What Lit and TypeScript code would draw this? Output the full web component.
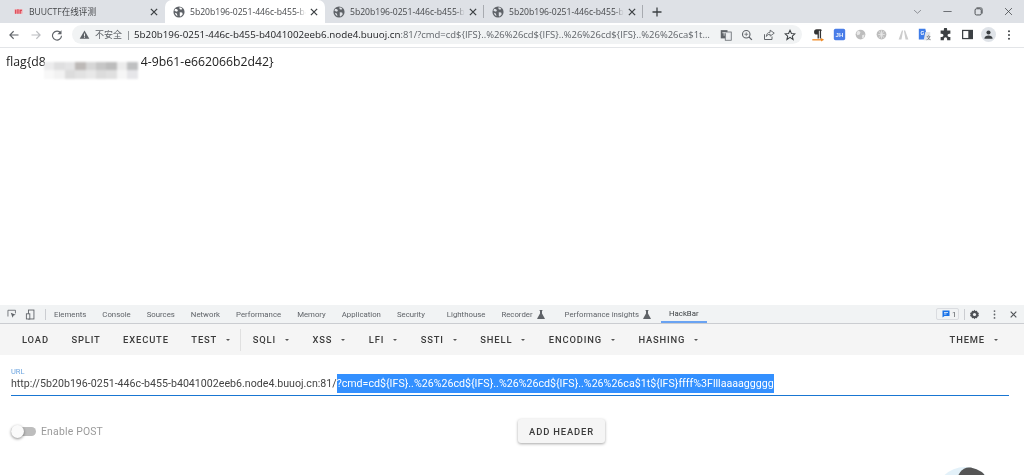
import { LitElement, html, css, svg } from "lit";
import { customElement } from "lit/decorators.js";

const icon = (w: number, body: unknown, vb = "0 0 16 16") =>
  html`<svg width=${w} height=${w} viewBox=${vb} class="ic">${body}</svg>`;

const globeBody = (bg: string) => svg`<circle cx="8" cy="8" r="7.4" fill="#5f6368"/><path d="M3 3.5c2 .3 3 1 3.6 2.2L5.4 7.6 3.3 7 1.8 6zM8.6 1.6c1.6.2 3 .9 3.9 2L10.8 5 8.7 4zM9 8.2l3.2.3.8 2.4-2.7 3-1.2-.6zM2.500 9l2.600 1 .9 3.400C4 12.900 3 11 2.500 9z" fill=${bg}/>`;
const globe = icon(12, globeBody("#dee1e6"));
const globeW = icon(12, globeBody("#fff"));
const close = (c = "#3c4043") => icon(10, svg`<path d="M3 3l10 10M13 3L3 13" stroke=${c} stroke-width="2" fill="none"/>`);
const caret = html`<span class="caret"></span>`;

const tabs = [
  { t: "BUUCTF在线评测", cls: "tab first", fav: icon(9, svg`<path d="M1 4h14v8H1z" fill="#f3a0a8"/><path d="M2 12V5h2v7zM6 12V4h2v8zM10 12V5h4v2h-2v5z" fill="#d9434f"/>`) },
  { t: "5b20b196-0251-446c-b455-b4041002eeb6", cls: "tab active", fav: globeW },
  { t: "5b20b196-0251-446c-b455-b4041002eeb6", cls: "tab", fav: globe },
  { t: "5b20b196-0251-446c-b455-b4041002eeb6", cls: "tab", fav: globe },
];

const flask = html`<svg width="8" height="9" viewBox="0 0 8 9" class="flask"><path d="M2.6 0h2.8v.9H5v2.6L7.8 8.400V9H.2v-.6L3 3.500V.9h-.4z" fill="#5f6368"/></svg>`;

const cells = [
  "#ececed","#dfdfe0","#e4e4e5","#bdb9b7","#d6d6d6","#c6c6c6","#bcbcbc","#ececec","#bfc0c1",
  "#f8f8f8","#f2f2f2","#dcdcdc","#e2e2e2","#e8e8e8","#dcdcdc","#e0e0e0","#f6f6f6","#e6e6e9",
];

@customElement("app-root")
export class AppRoot extends LitElement {
  static styles = css`
    :host { display: flex; flex-direction: column; width: 1024px; height: 475px; overflow: hidden; position: relative; background: #fff; font-family: "Open Sans", "Noto Sans CJK SC", sans-serif; color: #202124; filter: blur(0.35px); }
    .ic { display: block; flex: none; }
    .strip { display: flex; align-items: center; height: 23px; background: #dee1e6; flex: none; }
    .tab { width: 159px; height: 23px; box-sizing: border-box; display: flex; align-items: center; padding: 0 6px 0 8px; font-size: 8.6px; color: #45474a; flex: none; white-space: nowrap; }
    .tab.first { width: 165px; padding-left: 14px; }
    .tab.first .ttl { margin-left: 6px; width: 120px; }
    .tab.active { width: 160px; background: #fff; border-radius: 7px 7px 0 0; }
    .ttl { margin-left: 5px; width: 118px; overflow: hidden; margin-right: 3px; -webkit-mask-image: linear-gradient(90deg, #000 92%, transparent); mask-image: linear-gradient(90deg, #000 92%, transparent); }
    .sep { width: 1px; height: 13px; background: #a8abb0; flex: none; margin-left: -1px; }
    .plus { margin-left: 8px; flex: none; }
    .win { margin-left: auto; display: flex; gap: 19.5px; padding-right: 10px; align-items: center; }
    .toolbar { height: 23px; display: flex; align-items: center; flex: none; background: #fff; border-bottom: 1px solid #e3e5e8; padding-bottom: 1px; box-sizing: content-box; }
    .nav { display: flex; gap: 9.5px; padding-left: 8px; width: 72px; flex: none; box-sizing: border-box; }
    .omni { width: 730px; flex: none; height: 19px; border-radius: 10px; background: #f1f3f4; display: flex; align-items: center; padding-left: 7px; box-sizing: border-box; font-size: 9.8px; white-space: nowrap; }
    .warn { margin: 0 5px 0 0; }
    .insec { color: #5f6368; font-size: 9px; }
    .pipe { color: #5f6368; margin: 0 3px 0 4px; font-size: 9px; }
    .host { color: #202124; }
    .rest { color: #5f6368; }
    .ur { width: 313px; overflow: hidden; text-overflow: ellipsis; flex: none; font-size: 9.45px; }
    .omni-ic { margin-left: auto; display: flex; gap: 9.5px; padding-right: 6px; }
    .ext { display: flex; align-items: center; gap: 8.3px; padding-left: 8.5px; }
    .avatar { width: 15px; height: 15px; margin: 0 -1px; border-radius: 50%; background: #dfe3e8; display: flex; align-items: center; justify-content: center; }
    .page { flex: 1; min-height: 0; padding: 5px 0 0 6px; font-size: 12.25px; line-height: 18px; color: #222; }
    .mosaic { display: inline-grid; grid-template-columns: repeat(9, 1fr); grid-template-rows: 1fr 1fr; width: 94px; height: 17px; vertical-align: -4px; margin: 0 3px 0 -2px; filter: blur(0.9px); }
    .mosaic i { display: block; }
    .dev { flex: none; height: 170px; }
    .dt { height: 18px; background: #f1f3f4; border-bottom: 1px solid #cbcdd1; display: flex; align-items: center; font-size: 7.8px; color: #5f6368; font-family: "Roboto", sans-serif; }
    .dt-left { display: flex; gap: 8px; align-items: center; padding-left: 7px; }
    .dt-div { width: 1px; height: 11px; background: #cbcdd1; margin-left: 1px; }
    .dt-tabs { display: flex; margin-left: 8px; align-items: center; height: 18px; }
    .dt-tabs span { white-space: nowrap; display: inline-flex; align-items: center; gap: 4px; }
    .dt-tabs .m16 { margin-left: 16px; }
    .dt-tabs .m22 { margin-left: 22px; }
    .dt-tabs .m20 { margin-left: 20px; }
    .flask { flex: none; }
    .dt-tabs .hb-tab { height: 18px; box-sizing: border-box; padding: 0 8px; border-bottom: 2px solid #6aa3f2; color: #3c4043; margin: 0 0 0 10px; }
    .dt-right { margin-left: auto; display: flex; align-items: center; gap: 9px; padding-right: 6px; }
    .dt-right .dt-div { margin-right: -5px; }
    .badge { border: 1px solid #dadce0; border-radius: 2px; height: 12px; width: 23px; box-sizing: border-box; display: flex; align-items: center; gap: 2px; padding-left: 5px; font-size: 8px; margin-right: -5px; }
    .hb { height: 31px; background: #f5f5f5; display: flex; align-items: center; padding-left: 22px; font-family: Roboto, sans-serif; font-weight: 500; font-size: 9.4px; letter-spacing: 0.85px; color: #3b3b3b; white-space: nowrap; }
    .b { display: inline-flex; align-items: center; margin-right: 23.500px; }
    .b.lead { margin-right: 22.500px; }
    .caret { width: 0; height: 0; border-left: 2.500px solid transparent; border-right: 2.500px solid transparent; border-top: 2.500px solid #555; margin-left: 9px; }
    .hb-div { width: 1px; height: 22px; background: #e0e0e0; margin: 0 11.500px 0 -12.500px; }
    .b.theme { margin-left: auto; margin-right: 26px; }
    .form { padding: 0 15px 0 11px; }
    .lbl { font-family: Roboto, sans-serif; font-size: 7.500px; color: #6da5e0; line-height: 9px; padding-top: 12px; }
    .inp { border-bottom: 1px solid #1976d2; height: 22px; margin-top: -2px; font-family: Roboto, sans-serif; font-size: 10.650px; color: #444; white-space: nowrap; display: flex; align-items: flex-start; box-sizing: border-box; line-height: 19px; }
    .sel { background: #3390ff; color: #fff; height: 19px; }
    .row { display: flex; align-items: center; margin-top: 23px; height: 24px; position: relative; }
    .sw { width: 25px; height: 9px; background: #bdbdbd; border-radius: 5px; position: relative; flex: none; }
    .thumb { position: absolute; left: 0; top: -2px; width: 13px; height: 13px; border-radius: 50%; background: #fafafa; box-shadow: 0 1px 3px rgba(0,0,0,.45); }
    .post { font-family: Roboto, sans-serif; font-size: 10.400px; color: #9a9a9a; margin-left: 5px; letter-spacing: .2px; }
    .add { position: absolute; left: 507px; top: 0; width: 87px; height: 24px; border-radius: 3px; background: #f5f5f5; box-shadow: 0 1px 3px rgba(0,0,0,.35); font-family: Roboto, sans-serif; font-weight: 500; font-size: 9.400px; letter-spacing: .85px; color: #3b3b3b; display: flex; align-items: center; justify-content: center; }
    .bubble { position: absolute; left: 935px; top: 467px; width: 60px; height: 60px; border-radius: 50%; background: #e3f1f9; overflow: hidden; }
    .bubble i { position: absolute; left: 23px; top: 0; width: 27px; height: 22px; border-radius: 50%; background: #555; }
  `;

  render() {
    return html`
      <div class="strip">
        ${tabs.map((t, i) => html`
          <div class=${t.cls}>${t.fav}<span class="ttl">${t.t}</span>${close()}</div>
          ${i >= 2 ? html`<div class="sep"></div>` : ""}
        `)}
        <div class="plus">${icon(12, svg`<path d="M8 2v12M2 8h12" stroke="#3c4043" stroke-width="1.7"/>`)}</div>
        <div class="win">
          ${icon(11, svg`<path d="M3 6l5 4.500L13 6" stroke="#6b6e73" fill="none" stroke-width="1"/>`)}
          ${icon(11, svg`<path d="M2 8h12" stroke="#55585c" stroke-width="1.200"/>`)}
          ${icon(11, svg`<rect x="3" y="4" width="9" height="9" rx="2" fill="none" stroke="#3c4043" stroke-width="1.300"/><path d="M5 2.500h6a2.500 2.500 0 0 1 2.500 2.500v6" fill="none" stroke="#3c4043" stroke-width="1"/>`)}
          ${icon(11, svg`<path d="M3 3l10 10M13 3L3 13" stroke="#3c4043" stroke-width="1.100"/>`)}
        </div>
      </div>
      <div class="toolbar">
        <div class="nav">
          ${icon(12, svg`<path d="M14 8H3M7.500 3L2.500 8l5 5" stroke="#5f6368" stroke-width="1.500" fill="none"/>`)}
          ${icon(12, svg`<path d="M2 8h11M8.500 3l5 5-5 5" stroke="#babcbf" stroke-width="1.500" fill="none"/>`)}
          ${icon(12, svg`<path d="M13 5.500A6 6 0 1 0 14 9" stroke="#5f6368" stroke-width="1.500" fill="none"/><path d="M14 1.500V7H8.500z" fill="#5f6368"/>`)}
        </div>
        <div class="omni">
          <span class="warn">${icon(11, svg`<path d="M8 2l7 12H1z" fill="#5f6368"/><path d="M7.300 6.500h1.400v4H7.300zM7.300 11.300h1.400v1.300H7.300z" fill="#f1f3f4"/>`)}</span>
          <span class="insec">不安全</span><span class="pipe">|</span>
          <span class="host">5b20b196-0251-446c-b455-b4041002eeb6.node4.buuoj.cn</span>
          <span class="rest ur">:81/?cmd=cd\${IFS}..%26%26cd\${IFS}..%26%26cd\${IFS}..%26%26ca\$1t\${IFS}ffff%3Flllaaaaggggg</span>
          <div class="omni-ic">
            ${icon(12, svg`<rect x="1" y="1.500" width="9" height="11" fill="#5f6368"/><rect x="7" y="4" width="8" height="11" fill="#e8eaed" stroke="#5f6368"/><path d="M3 5h5M5.500 4v5M9 8h4M11 7v5" stroke="#f1f3f4" stroke-width="1"/>`)}
            ${icon(12, svg`<circle cx="7" cy="7" r="5" fill="none" stroke="#5f6368" stroke-width="1.500"/><path d="M10.500 10.500l4 4" stroke="#5f6368" stroke-width="1.800"/><path d="M4.500 7h5M7 4.500v5" stroke="#5f6368"/>`)}
            ${icon(12, svg`<path d="M2 7v7h10V10" fill="none" stroke="#5f6368" stroke-width="1.300"/><path d="M9.500 1.500L15 5.500 9.500 9.500V7C7 7 5.500 8 4.500 10c0-3.500 2-5.500 5-5.700z" fill="none" stroke="#5f6368" stroke-width="1.200"/>`)}
            ${icon(12, svg`<path d="M8 1.700l1.900 4.200 4.600.5-3.400 3.100 1 4.500L8 11.200l-4.100 2.800 1-4.500L1.500 6.400l4.600-.5z" fill="none" stroke="#3c4043" stroke-width="1.400"/>`)}
          </div>
        </div>
        <div class="ext">
          ${icon(14, svg`<path d="M11.500 1.500H6.500a3 3 0 0 0 0 6H7.500V12H9V3h1v9h1.500V3h1z" fill="#333"/><path d="M1.500 13.500h11" stroke="#f08a24" stroke-width="1.500"/><path d="M11.500 11.500l3.500 2-3.500 2z" fill="#f08a24"/>`)}
          ${icon(13, svg`<rect x="1" y="1" width="14" height="14" rx="2" fill="#4a7de8"/><text x="8" y="11" text-anchor="middle" font-family="Liberation Sans" font-size="7.500" font-weight="700" fill="#e8f0fe">JH</text>`)}
          ${icon(13, svg`<circle cx="8" cy="8" r="6" fill="#bdbdbd"/><path d="M5 3l3 2-1 3-3 1-1-3zM10 9l3-1-1 4-2 1z" fill="#e8e8e8"/>`)}
          ${icon(13, svg`<circle cx="8" cy="8" r="6" fill="#bdbdbd"/><path d="M4 8h8M8 3v10M5 4l6 8M11 4l-6 8" stroke="#e8e8e8" stroke-width="1"/>`)}
          ${icon(13, svg`<path d="M2 14L6 3h1.500L5.500 14zM14 14L10 3H8.500l2 11z" fill="#ccc"/>`)}
          ${icon(13, svg`<path d="M1 1h8l3 13H1z" fill="#3f7de8"/><path d="M9 5h6v10H7z" fill="#dfe3e8"/><text x="3" y="9" font-family="Liberation Sans" font-size="6" font-weight="700" fill="#fff">G</text><text x="10" y="13" font-family="Noto Sans CJK SC" font-size="6" fill="#555">文</text>`)}
          ${icon(13, svg`<path d="M6 1.500a2 2 0 0 1 4 0V3h4v4h-1.500a2 2 0 0 0 0 4H14v4H10v-1.500a2 2 0 0 0-4 0V15H2v-4h1.500a2 2 0 0 0 0-4H2V3h4z" fill="#3c4043"/>`)}
          ${icon(13, svg`<rect x="2" y="3" width="12" height="10" fill="none" stroke="#3c4043" stroke-width="1.500"/><rect x="9" y="3" width="5" height="10" fill="#3c4043"/>`)}
          <span class="avatar">${icon(11, svg`<circle cx="8" cy="5" r="3" fill="#3c4043"/><path d="M2 14c0-3 3-4.500 6-4.500s6 1.500 6 4.500z" fill="#3c4043"/>`)}</span>
          ${icon(12, svg`<circle cx="8" cy="3" r="1.300" fill="#3c4043"/><circle cx="8" cy="8" r="1.300" fill="#3c4043"/><circle cx="8" cy="13" r="1.300" fill="#3c4043"/>`)}
        </div>
      </div>
      <div class="page">flag{d8<span class="mosaic">${cells.map((c) => html`<i style=${`background:${c}`}></i>`)}</span>4-9b61-e662066b2d42}</div>
      <div class="dev">
        <div class="dt">
          <div class="dt-left">
            ${icon(10, svg`<path d="M1.500 12V2h12v5" fill="none" stroke="#5f6368" stroke-width="1.300"/><path d="M6 6l8 3-3.500 1.500L9 14z" fill="#5f6368"/>`)}
            ${icon(11, svg`<rect x="5" y="1.500" width="8" height="13" fill="none" stroke="#5f6368" stroke-width="1.300"/><rect x="2" y="7" width="5" height="7.500" fill="#f1f3f4" stroke="#5f6368" stroke-width="1.300"/>`)}
            <span class="dt-div"></span>
          </div>
          <div class="dt-tabs">
            <span>Elements</span><span class="m16">Console</span><span class="m16">Sources</span><span class="m16">Network</span><span class="m16">Performance</span><span class="m16">Memory</span><span class="m16">Application</span><span class="m16">Security</span><span class="m22">Lighthouse</span><span class="m16">Recorder ${flask}</span><span class="m20">Performance insights ${flask}</span>
            <span class="hb-tab">HackBar</span>
          </div>
          <div class="dt-right">
            <span class="badge">${icon(8, svg`<path d="M1 1h14v11H5l-4 3z" fill="#1a73e8"/><path d="M4 5h8M4 8h5" stroke="#fff" stroke-width="1.500"/>`)}1</span>
            <span class="dt-div"></span>
            ${icon(11, svg`<path d="M8 1l1.300 2 2.300-.6.7 2.300 2.200 1-.9 2.300.9 2.300-2.200 1-.7 2.300-2.300-.6L8 15l-1.300-2-2.300.6-.7-2.300-2.200-1 .9-2.300-.9-2.300 2.200-1 .7-2.300 2.300.6z" fill="#4f5256"/><circle cx="8" cy="8" r="2.300" fill="#f1f3f4"/>`)}
            ${icon(11, svg`<circle cx="8" cy="3" r="1.300" fill="#5f6368"/><circle cx="8" cy="8" r="1.300" fill="#5f6368"/><circle cx="8" cy="13" r="1.300" fill="#5f6368"/>`)}
            ${icon(9, svg`<path d="M3 3l10 10M13 3L3 13" stroke="#4f5256" stroke-width="2"/>`)}
          </div>
        </div>
        <div class="hb">
          <span class="b lead">LOAD</span><span class="b lead">SPLIT</span><span class="b lead">EXECUTE</span>
          <span class="b lead">TEST${caret}</span><span class="hb-div"></span>
          <span class="b">SQLI${caret}</span><span class="b">XSS${caret}</span><span class="b">LFI${caret}</span><span class="b">SSTI${caret}</span><span class="b">SHELL${caret}</span><span class="b">ENCODING${caret}</span><span class="b">HASHING${caret}</span>
          <span class="b theme">THEME${caret}</span>
        </div>
        <div class="form">
          <div class="lbl">URL</div>
          <div class="inp"><span>http://5b20b196-0251-446c-b455-b4041002eeb6.node4.buuoj.cn:81/</span><span class="sel">?cmd=cd\${IFS}..%26%26cd\${IFS}..%26%26cd\${IFS}..%26%26ca\$1t\${IFS}ffff%3Flllaaaaggggg</span></div>
          <div class="row">
            <span class="sw"><span class="thumb"></span></span>
            <span class="post">Enable POST</span>
            <span class="add">ADD HEADER</span>
          </div>
        </div>
      </div>
      <div class="bubble"><i></i></div>
    `;
  }
}
